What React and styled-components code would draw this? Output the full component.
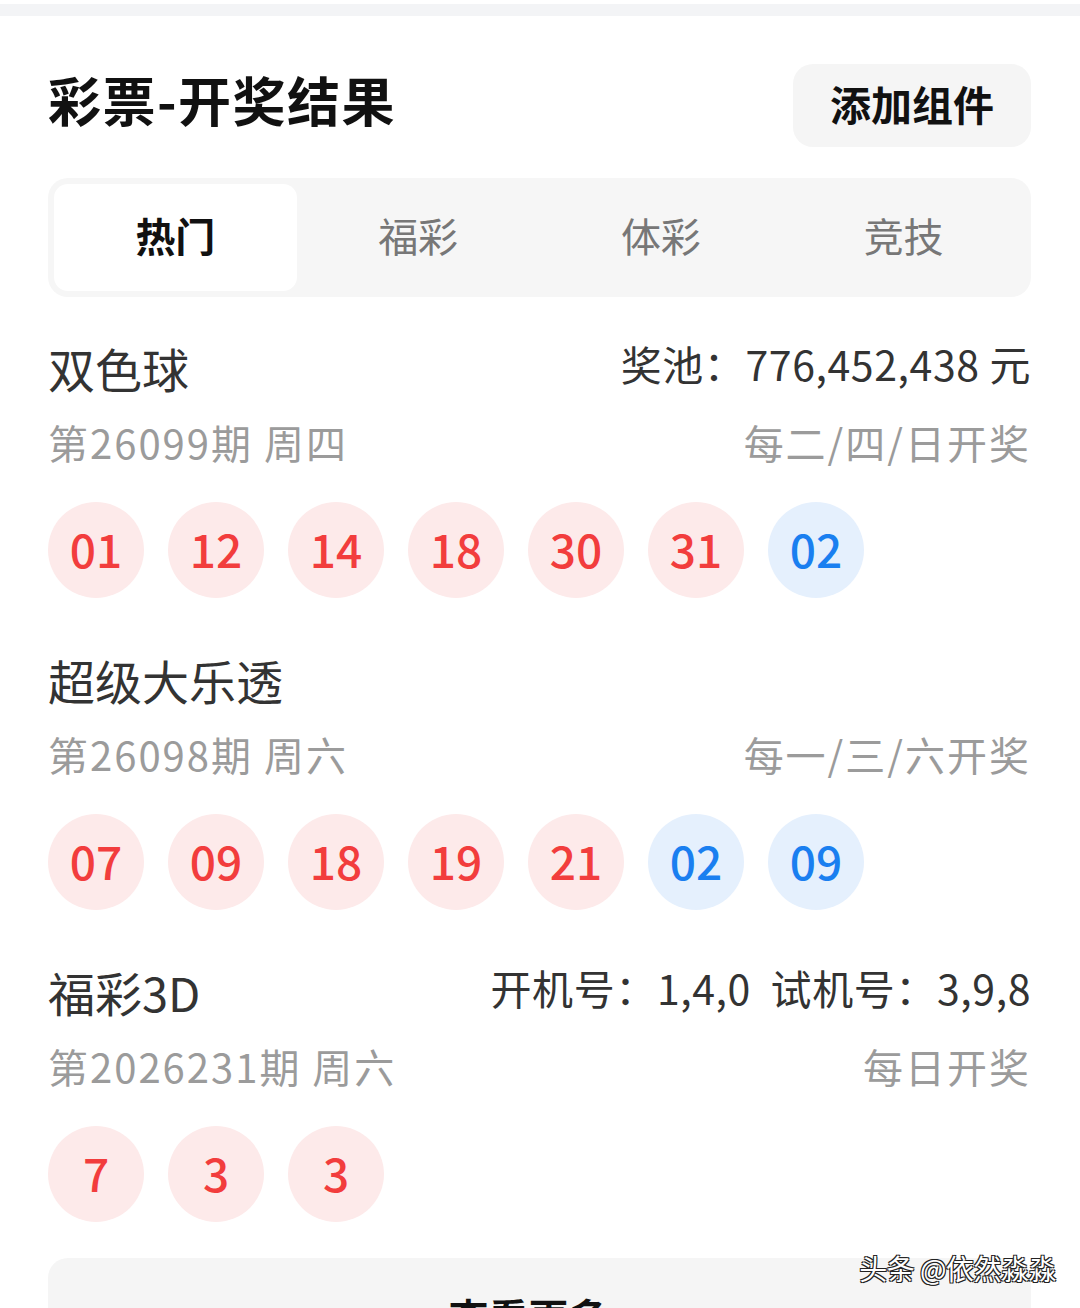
import React from "react";
import styled, { createGlobalStyle } from "styled-components";

const GlobalStyle = createGlobalStyle`
  html, body {
    margin: 0;
    padding: 0;
    background: #fff;
  }
  body {
    font-family: "Noto Sans CJK SC", "Noto Sans", sans-serif;
    color: #333;
  }
`;

const Page = styled.div`
  position: relative;
  width: 1080px;
  min-height: 1308px;
  background: #fff;
`;

const TopStrip = styled.div`
  margin-top: 4px;
  height: 12px;
  background: #f3f4f6;
`;

const Card = styled.div`
  padding: 48px 49px 0 48px;
`;

const Header = styled.div`
  display: flex;
  align-items: center;
  justify-content: space-between;
  height: 83px;
`;

const Title = styled.h1`
  margin: -12px 0 0;
  font-size: 53px;
  font-weight: 700;
  letter-spacing: 1.5px;
  color: #111;
  line-height: 1;
`;

const AddButton = styled.button`
  width: 238px;
  height: 83px;
  border: none;
  border-radius: 20px;
  background: #f5f5f5;
  font-family: inherit;
  font-size: 41px;
  font-weight: 700;
  color: #111;
  padding: 0 0 6px;
`;

const Tabs = styled.div`
  display: grid;
  grid-template-columns: repeat(4, 1fr);
  margin-top: 31px;
  padding: 6px;
  height: 119px;
  box-sizing: border-box;
  background: #f6f6f6;
  border-radius: 20px;
`;

const Tab = styled.div`
  display: flex;
  align-items: center;
  justify-content: center;
  padding-bottom: 6px;
  border-radius: 14px;
  font-size: 40px;
  font-weight: ${(p) => (p.$active ? 700 : 400)};
  color: ${(p) => (p.$active ? "#111" : "#777")};
  background: ${(p) => (p.$active ? "#fff" : "transparent")};
`;

const Section = styled.section`
  margin-top: ${(p) => p.$top}px;
`;

const Row = styled.div`
  display: flex;
  align-items: center;
  justify-content: space-between;
  height: 56px;
  margin-top: ${(p) => p.$gap || 0}px;
  padding-bottom: 6px;
  box-sizing: border-box;
`;

const Name = styled.div`
  font-size: 47px;
  color: #333;
`;

const Extra = styled.div`
  font-size: 41px;
  letter-spacing: 0.6px;
  color: #333;
  margin-top: -8px;
  white-space: pre;
`;

const Sub = styled.div`
  font-size: 40px;
  letter-spacing: 2px;
  color: #9b9b9b;
  white-space: pre;
`;

const Balls = styled.div`
  display: flex;
  gap: 24px;
  margin-top: 29px;
`;

const Ball = styled.div`
  width: 96px;
  height: 96px;
  border-radius: 50%;
  display: flex;
  align-items: center;
  justify-content: center;
  padding-bottom: 5px;
  box-sizing: border-box;
  font-size: 46px;
  font-weight: 500;
  color: ${(p) => (p.$blue ? "#1a7ff0" : "#f23d3d")};
  background: ${(p) => (p.$blue ? "#e5f0fd" : "#fdeaea")};
`;

const More = styled.div`
  margin-top: 36px;
  height: 116px;
  border-radius: 20px;
  background: #f5f5f5;
  display: flex;
  align-items: center;
  justify-content: center;
  font-size: 40px;
  font-weight: 700;
  color: #111;
`;

const Watermark = styled.div`
  position: absolute;
  right: 24px;
  top: 1244px;
  font-size: 28px;
  color: #fff;
  letter-spacing: -0.5px;
  text-shadow: -1px -1px 0 #222, 1px -1px 0 #222, -1px 1px 0 #222,
    1px 1px 0 #222;
`;

const draws = [
  {
    name: "双色球",
    extra: "奖池：776,452,438 元",
    issue: "第26099期 周四",
    schedule: "每二/四/日开奖",
    red: ["01", "12", "14", "18", "30", "31"],
    blue: ["02"],
  },
  {
    name: "超级大乐透",
    issue: "第26098期 周六",
    schedule: "每一/三/六开奖",
    red: ["07", "09", "18", "19", "21"],
    blue: ["02", "09"],
  },
  {
    name: "福彩3D",
    extra: "开机号：1,4,0  试机号：3,9,8",
    issue: "第2026231期 周六",
    schedule: "每日开奖",
    red: ["7", "3", "3"],
    blue: [],
  },
];

const tabs = ["热门", "福彩", "体彩", "竞技"];

export default function App() {
  return (
    <Page>
      <GlobalStyle />
      <TopStrip />
      <Card>
        <Header>
          <Title>彩票-开奖结果</Title>
          <AddButton>添加组件</AddButton>
        </Header>
        <Tabs>
          {tabs.map((t, i) => (
            <Tab key={t} $active={i === 0}>
              {t}
            </Tab>
          ))}
        </Tabs>
        {draws.map((d, i) => (
          <Section key={d.name} $top={i === 0 ? 45 : 56}>
            <Row>
              <Name>{d.name}</Name>
              {d.extra && <Extra>{d.extra}</Extra>}
            </Row>
            <Row $gap={19}>
              <Sub>{d.issue}</Sub>
              <Sub>{d.schedule}</Sub>
            </Row>
            <Balls>
              {d.red.map((n, k) => (
                <Ball key={"r" + k}>{n}</Ball>
              ))}
              {d.blue.map((n, k) => (
                <Ball key={"b" + k} $blue>
                  {n}
                </Ball>
              ))}
            </Balls>
          </Section>
        ))}
        <More>查看更多 ›</More>
      </Card>
      <Watermark>头条 @依然淼淼</Watermark>
    </Page>
  );
}
